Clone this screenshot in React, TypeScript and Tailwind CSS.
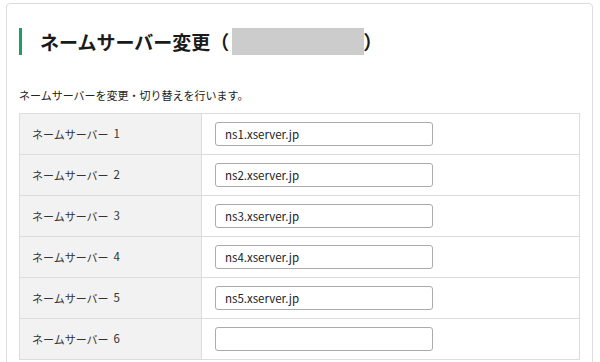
import React from "react";

const rows = [
  { label: "ネームサーバー 1", value: "ns1.xserver.jp" },
  { label: "ネームサーバー 2", value: "ns2.xserver.jp" },
  { label: "ネームサーバー 3", value: "ns3.xserver.jp" },
  { label: "ネームサーバー 4", value: "ns4.xserver.jp" },
  { label: "ネームサーバー 5", value: "ns5.xserver.jp" },
  { label: "ネームサーバー 6", value: "" },
];

export default function App() {
  return (
    <div
      className="w-[600px] h-[362px] overflow-hidden bg-white pt-[3px] pl-[6px] pr-[7px]"
      style={{ fontFamily: '"Noto Sans CJK JP", "Noto Sans", sans-serif' }}
    >
      <div className="border border-[#dcdcdc] rounded-[4px] px-[12px] pt-[24px] h-[400px]">
        <div className="flex items-center h-[27px] border-l-[3px] border-[#1c9f66] pl-[18px] text-[19px] font-bold text-[#1a1a1a] leading-[27px]">
          <span>ネームサーバー変更（</span>
          <span className="inline-block w-[132px] h-[27px] bg-[#cccccc] ml-[3px]"></span>
          <span className="ml-[-1px]">）</span>
        </div>
        <p className="mt-[31px] text-[11px] leading-[18px] text-[#222]">
          ネームサーバーを変更・切り替えを行います。
        </p>
        <div className="mt-[9px] border-t border-l border-r border-[#dcdcdc]">
          {rows.map((r) => (
            <div key={r.label} className="flex h-[41px] border-b border-[#dcdcdc]">
              <div className="w-[182px] shrink-0 bg-[#f2f2f2] border-r border-[#dcdcdc] flex items-center pl-[12px] text-[11px] text-[#333]">
                <span>ネームサーバー</span>
                <span className="ml-[5px] text-[11.5px]">{r.label.slice(-1)}</span>
              </div>
              <div className="flex items-center pl-[13px]">
                <input
                  readOnly
                  value={r.value}
                  className="w-[218px] h-[24px] border border-[#ababab] rounded-[3px] px-[9px] text-[11.5px] text-[#222] bg-white outline-none"
                  style={{ fontFamily: '"Noto Sans CJK JP", "Noto Sans", sans-serif' }}
                />
              </div>
            </div>
          ))}
        </div>
      </div>
    </div>
  );
}
